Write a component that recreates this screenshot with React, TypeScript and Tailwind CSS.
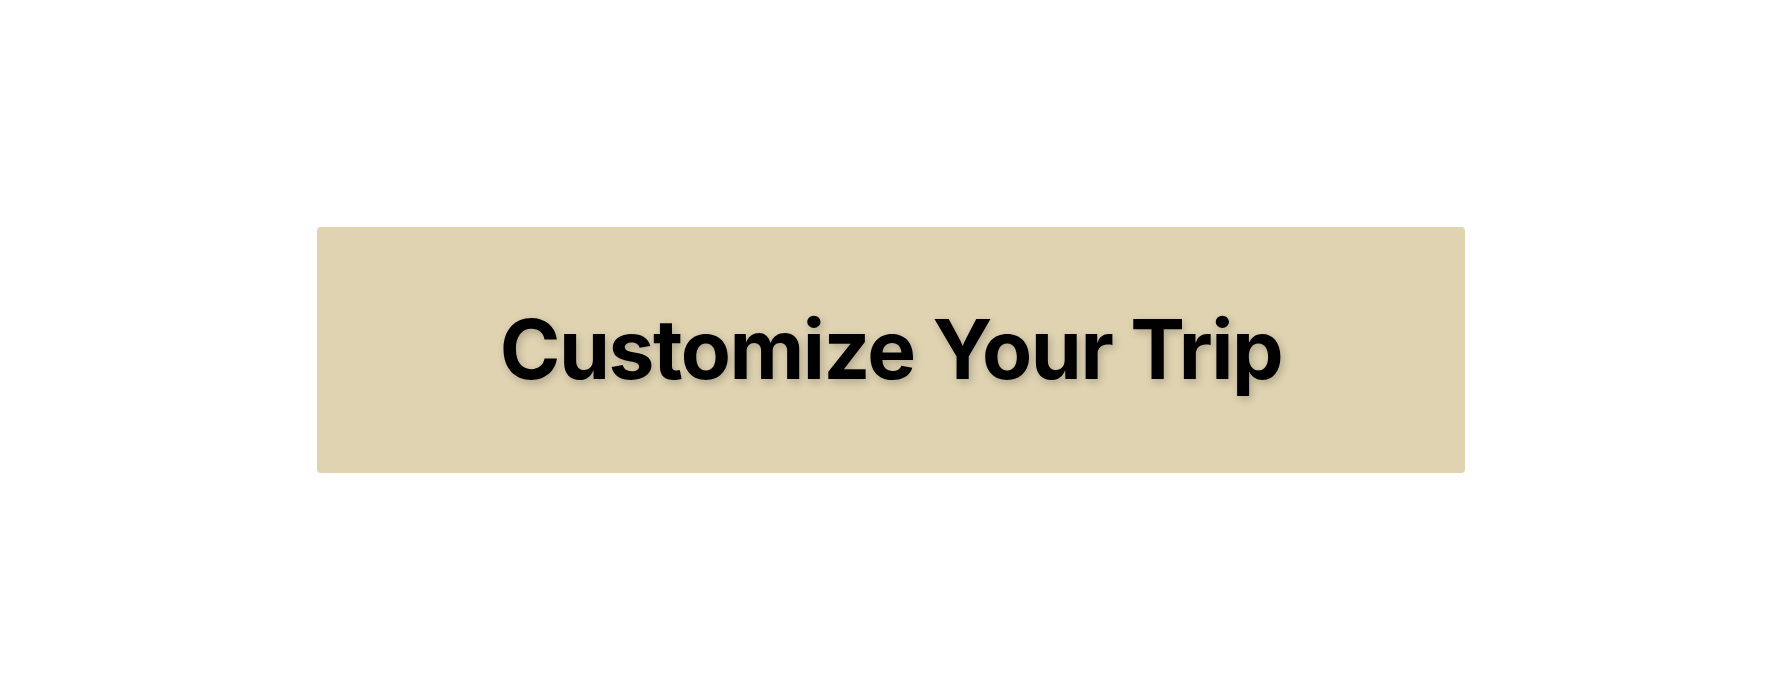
export default function App() {
  return (
    <div className="flex h-[700px] w-full items-center bg-white pl-[317px] pr-[309px]">
      <div className="flex h-[246px] w-full items-center justify-center rounded bg-[#dfd3b2]">
        <h1 className="font-['Inter',sans-serif] text-[82px] font-bold leading-none tracking-[-1.5px] text-black [text-shadow:2px_3px_8px_rgba(0,0,0,0.22)]">
          Customize Your Trip
        </h1>
      </div>
    </div>
  );
}
